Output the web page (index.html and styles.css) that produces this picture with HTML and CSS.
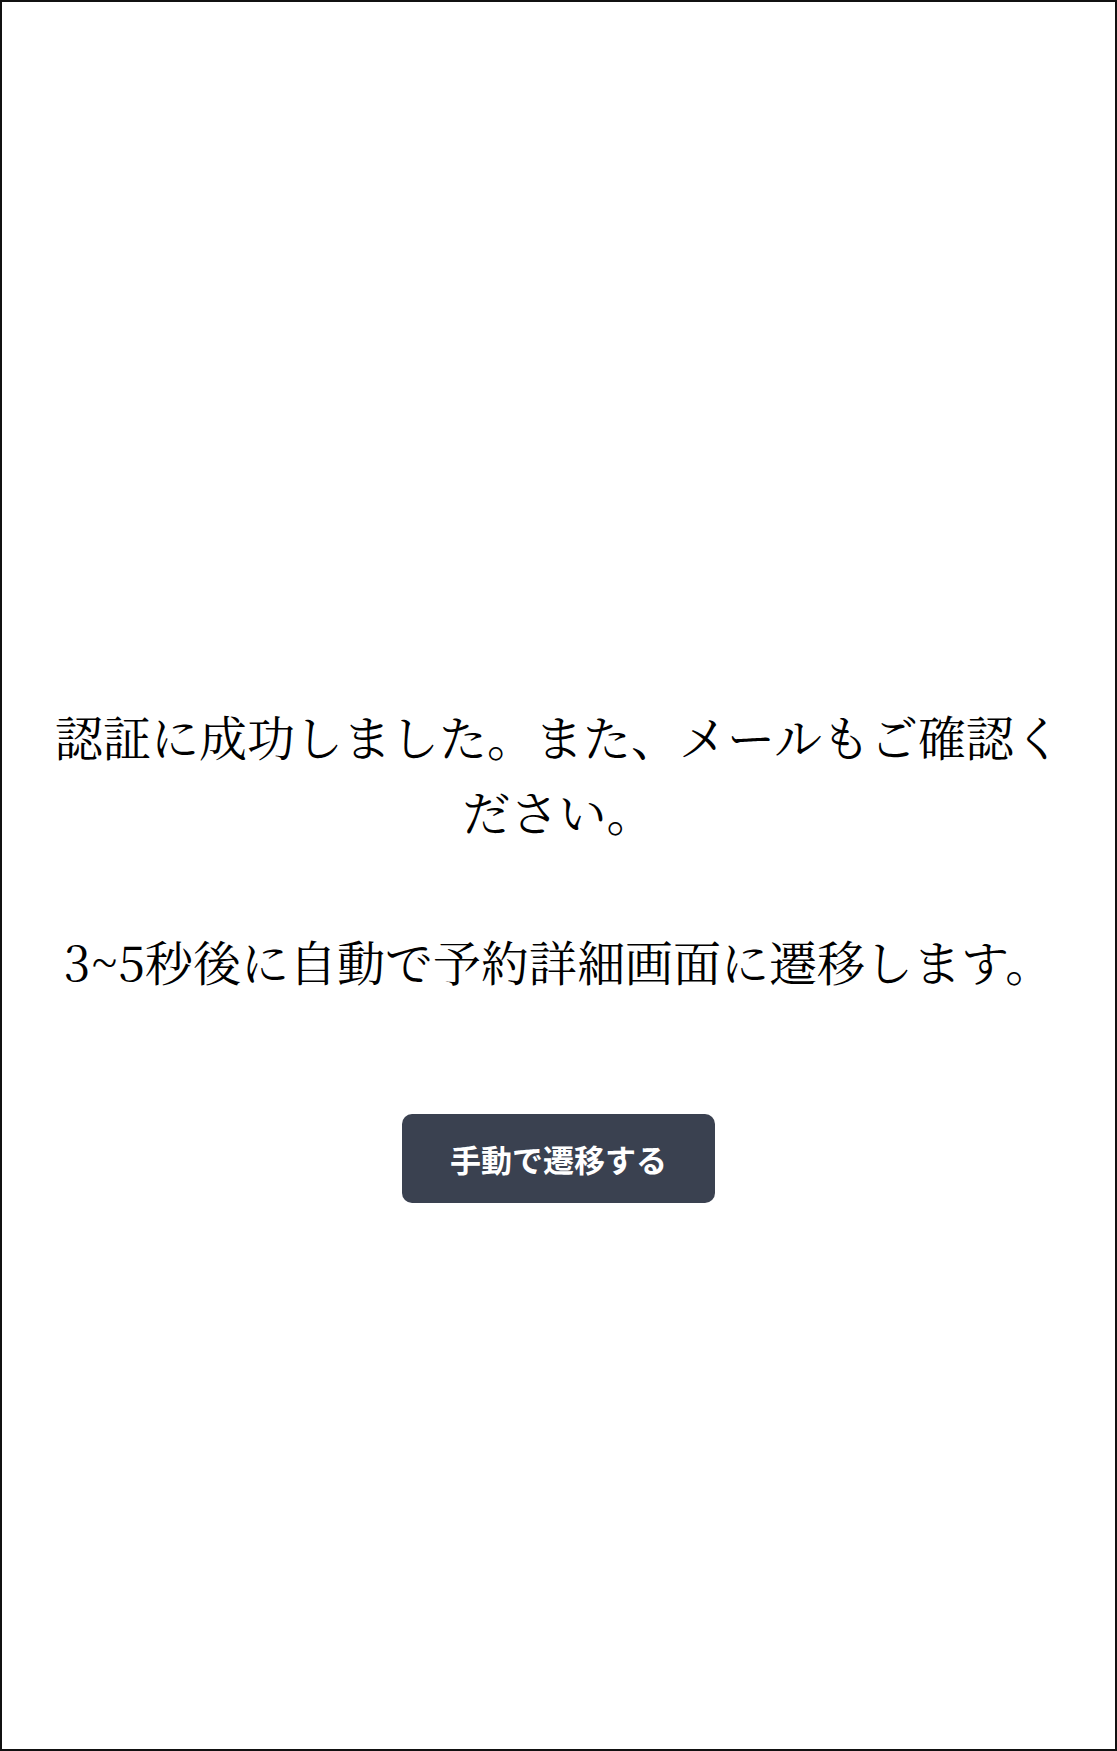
FILE: index.html
```html
<!DOCTYPE html>
<html lang="ja">
<head>
<meta charset="utf-8">
<title>認証成功</title>
<link rel="stylesheet" href="styles.css">
</head>
<body>
<div class="frame">
  <main class="content">
    <p class="message">認証に成功しました。また、メールもご確認ください。</p>
    <p class="message">3~5秒後に自動で予約詳細画面に遷移します。</p>
    <button class="btn" type="button">手動で遷移する</button>
  </main>
</div>
</body>
</html>
```

FILE: styles.css
```css
html, body {
  margin: 0;
  padding: 0;
  background: #fff;
}

.frame {
  box-sizing: border-box;
  min-height: 100vh;
  border: 2px solid #111;
  display: flex;
  flex-direction: column;
  align-items: center;
}

.content {
  box-sizing: border-box;
  width: 1030px;
  padding-top: 696px;
  display: flex;
  flex-direction: column;
  align-items: center;
}

.message {
  margin: 0 0 75px;
  width: 100%;
  text-align: center;
  font-family: "Noto Serif CJK JP", "Liberation Serif", "Noto Sans CJK JP", serif;
  font-size: 48px;
  line-height: 75px;
  color: #000;
}

.message + .message {
  margin-bottom: 116px;
}

.btn {
  box-sizing: border-box;
  width: 313px;
  height: 89px;
  border: none;
  border-radius: 10px;
  background: #3a4150;
  color: #fff;
  font-family: "Noto Sans CJK JP", "Noto Sans", sans-serif;
  font-weight: 700;
  font-size: 31px;
  padding: 0;
  cursor: pointer;
}
```
